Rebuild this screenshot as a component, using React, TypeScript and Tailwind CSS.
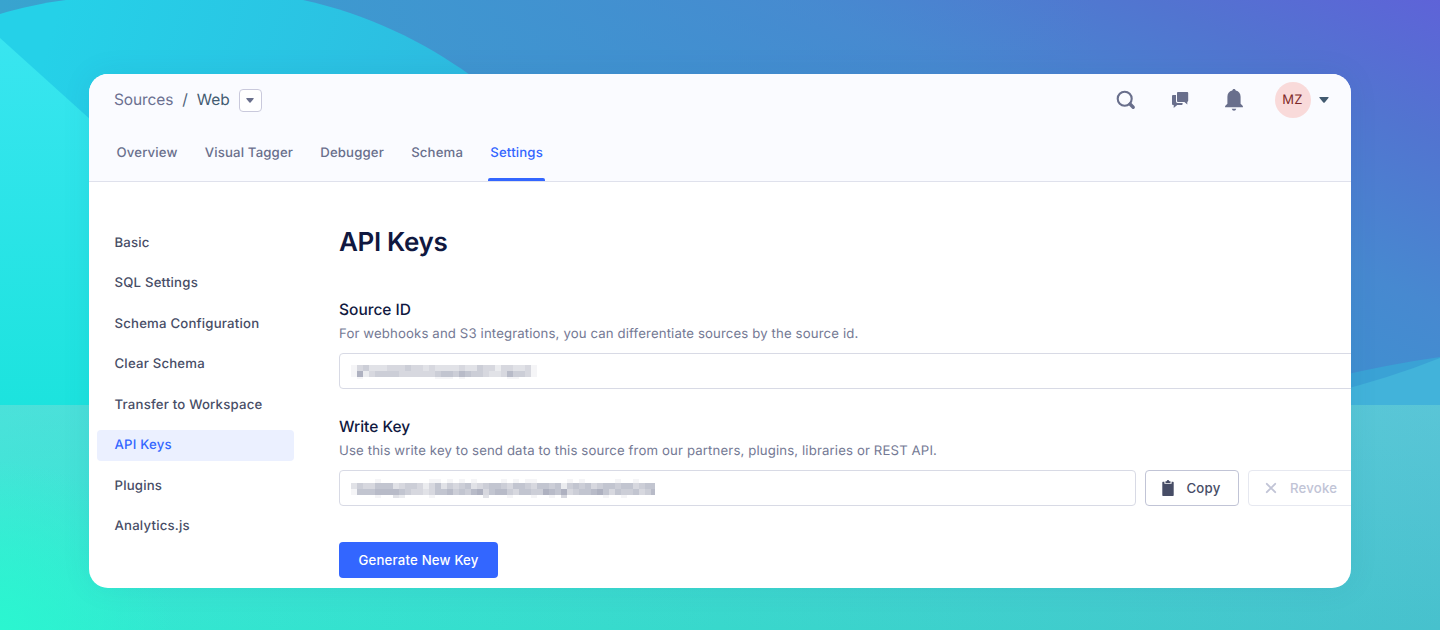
import React from "react";

const sidebarItems = [
  "Basic",
  "SQL Settings",
  "Schema Configuration",
  "Clear Schema",
  "Transfer to Workspace",
  "API Keys",
  "Plugins",
  "Analytics.js",
];

const tabs = ["Overview", "Visual Tagger", "Debugger", "Schema", "Settings"];

function Backdrop() {
  return (
    <svg
      className="absolute inset-0 h-full w-full"
      viewBox="0 0 1440 630"
      preserveAspectRatio="none"
      aria-hidden="true"
    >
      <defs>
        <linearGradient id="base" gradientUnits="userSpaceOnUse" x1="1440" y1="0" x2="1170" y2="560">
          <stop offset="0" stopColor="#5e63d8" />
          <stop offset="0.2" stopColor="#5274d0" />
          <stop offset="0.45" stopColor="#4789d0" />
          <stop offset="0.7" stopColor="#3c92d0" />
          <stop offset="1" stopColor="#3a9acf" />
        </linearGradient>
        <linearGradient id="baseLeft" gradientUnits="userSpaceOnUse" x1="0" y1="0" x2="1100" y2="0">
          <stop offset="0" stopColor="#38a4cf" />
          <stop offset="0.4" stopColor="#4096d0" stopOpacity="0.85" />
          <stop offset="1" stopColor="#4a86d0" stopOpacity="0" />
        </linearGradient>
        <linearGradient id="blob" gradientUnits="userSpaceOnUse" x1="60" y1="0" x2="460" y2="120">
          <stop offset="0" stopColor="#25d1e8" />
          <stop offset="1" stopColor="#2ebbe0" />
        </linearGradient>
        <linearGradient id="left" x1="0" y1="0" x2="0" y2="1">
          <stop offset="0" stopColor="#39e5f0" />
          <stop offset="1" stopColor="#1be3dd" />
        </linearGradient>
        <linearGradient id="floor" gradientUnits="userSpaceOnUse" x1="0" y1="560" x2="1440" y2="560">
          <stop offset="0" stopColor="#31ebd2" />
          <stop offset="0.5" stopColor="#38d8cc" />
          <stop offset="1" stopColor="#47c1cd" />
        </linearGradient>
        <linearGradient id="floorLight" x1="0" y1="0" x2="0" y2="1">
          <stop offset="0" stopColor="#7fcdea" stopOpacity="0.33" />
          <stop offset="1" stopColor="#7fcdea" stopOpacity="0" />
        </linearGradient>
        <radialGradient id="corner" gradientUnits="userSpaceOnUse" cx="0" cy="630" r="170">
          <stop offset="0" stopColor="#2bf6d0" />
          <stop offset="1" stopColor="#2bf6d0" stopOpacity="0" />
        </radialGradient>
      </defs>
      <rect width="1440" height="630" fill="url(#base)" />
      <rect width="1100" height="420" fill="url(#baseLeft)" />
      <path d="M0 14C20 8 42 3 66 0H303C368 14 424 42 470 75L520 130V420H0Z" fill="url(#blob)" />
      <path d="M0 38L92 121V420H0Z" fill="url(#left)" />
      <path d="M1330 378Q1390 364 1440 357V420H1330Z" fill="#3aa2d5" />
      <path d="M1330 393Q1390 378 1440 358V420H1330Z" fill="#42b3da" />
      <rect y="405" width="1440" height="225" fill="url(#floor)" />
      <rect y="405" width="1440" height="225" fill="url(#floorLight)" />
      <rect y="405" width="400" height="225" fill="url(#corner)" />
    </svg>
  );
}

type MosaicRow = { y: number; height: number; cells: string };

/* Each digit is the darkness of one six-pixel cell of the obscured value. */
function Mosaic({ rows, width, height }: { rows: MosaicRow[]; width: number; height: number }) {
  return (
    <svg width={width} height={height} viewBox={`0 0 ${width} ${height}`} shapeRendering="crispEdges" aria-hidden="true">
      {rows.map((row) =>
        row.cells.split("").map((c, i) =>
          c === "0" ? null : (
            <rect
              key={`${row.y}-${i}`}
              x={i * 6}
              y={row.y}
              width={6}
              height={row.height}
              fill="#9a9eb0"
              fillOpacity={Number(c) / 10}
            />
          ),
        ),
      )}
    </svg>
  );
}

const sourceIdRows: MosaicRow[] = [
  { y: 4, height: 6, cells: "1453334445443433334335442443341" },
  { y: 10, height: 6, cells: "1824555544444456657655433475541" },
  { y: 16, height: 2, cells: "0100000000000011101000000011000" },
];

const writeKeyRows: MosaicRow[] = [
  { y: 0, height: 4, cells: "000010000000011010101000010101100000101000001001000" },
  { y: 4, height: 6, cells: "354466634554246354563456654665466562565645665664566" },
  { y: 10, height: 6, cells: "166677776544346675657846775466558768456678646556457" },
  { y: 16, height: 3, cells: "000010032000010000000030001000100104000000100100000" },
];

function Caret({ className }: { className: string }) {
  return (
    <svg width="10" height="6" viewBox="0 0 10 6" className={className} aria-hidden="true">
      <path d="M0.8 0H9.2Q10 .2 9.4 1L5.7 5.5Q5 6.1 4.3 5.5L.6 1Q0 .2 .8 0Z" fill="currentColor" />
    </svg>
  );
}

function Header() {
  return (
    <header className="flex h-[108px] flex-col border-b border-[#dfe1ec] bg-[#fafbff]">
      <div className="flex h-[52px] items-center justify-between pr-[22px] pl-[25px]">
        <div className="flex items-center text-[15.5px] tracking-[-0.1px] text-[#6b7090]">
          <span>Sources</span>
          <span className="ml-[9px] text-[#4d6178]">/</span>
          <span className="ml-[9px] text-[#425a70]">Web</span>
          <button className="ml-[9px] flex h-[23px] w-[23px] items-center justify-center rounded-[4px] border border-[#c9c9dc] bg-white">
            <Caret className="h-[5px] w-[8px] text-[#696f8c]" />
          </button>
        </div>
        <div className="flex items-center text-[#696f8c]">
          <svg width="20" height="20" viewBox="0 0 20 20" aria-hidden="true">
            <circle cx="8.7" cy="8.7" r="7" fill="none" stroke="currentColor" strokeWidth="2.1" />
            <path d="M14 14L17.2 17.2" stroke="currentColor" strokeWidth="3.4" strokeLinecap="round" />
          </svg>
          <svg width="18" height="18" viewBox="0 0 18 18" className="ml-[35px]" aria-hidden="true">
            <path
              d="M6.9 1H16.3Q17.2 1 17.2 1.9V9.8Q17.2 10.7 16.3 10.7V13.4L13.4 10.9H6.9Q6 10.9 6 10V1.9Q6 1 6.9 1Z"
              fill="currentColor"
            />
            <path
              d="M5 4V10.6Q5 12 6.4 12H11.6V13Q11.6 14 10.6 14H6.2L2.7 17V14H2Q1 14 1 13V5Q1 4 2 4Z"
              fill="currentColor"
            />
          </svg>
          <svg width="20" height="24" viewBox="0 0 20 24" className="ml-[35px]" aria-hidden="true">
            <path
              d="M10 1C10.9 1 11.6 1.7 11.7 2.6C14.9 3.3 16.6 5.8 16.6 8.8V15.8L18.4 17.4Q19.2 18.2 18.9 19.2H1.1Q.8 18.2 1.6 17.4L3.4 15.8V8.8C3.4 5.8 5.1 3.3 8.3 2.6C8.4 1.7 9.1 1 10 1Z"
              fill="currentColor"
            />
            <path d="M7.7 20.8H12.3Q11.7 22.8 10 22.8T7.7 20.8Z" fill="currentColor" />
          </svg>
          <div className="ml-[30.5px] flex h-9 w-9 items-center justify-center rounded-full bg-[#f9dada] pt-px text-[13px] tracking-[0.2px] text-[#7d2828]">
            MZ
          </div>
          <Caret className="ml-[8.5px] text-[#425a70]" />
        </div>
      </div>
      <nav className="flex flex-1 gap-[23.2px] pl-[25.5px] text-[13.2px] font-medium tracking-[0.15px] text-[#696f8c]">
        {tabs.map((tab) => (
          <a
            key={tab}
            className={
              tab === "Settings"
                ? "flex flex-col justify-between px-[2px] pt-[17px] whitespace-nowrap text-[#3366ff]"
                : "px-[2px] pt-[17px] whitespace-nowrap"
            }
          >
            <span className="block leading-5">{tab}</span>
            {tab === "Settings" && <span className="-mx-[2px] h-[3px] rounded-t-[2px] bg-[#3366ff]" />}
          </a>
        ))}
      </nav>
    </header>
  );
}

function Sidebar() {
  return (
    <aside className="flex w-[197px] shrink-0 flex-col gap-[9.5px] pt-[45px] text-[13.2px] font-medium tracking-[0.2px] text-[#474d66]">
      {sidebarItems.map((item) => (
        <a
          key={item}
          className={
            item === "API Keys"
              ? "flex h-[31px] items-center rounded-[4px] bg-[#ebf0ff] pt-[2px] pl-[17.5px] text-[#3366ff]"
              : "flex h-[31px] items-center pt-[2px] pl-[17.5px]"
          }
        >
          {item}
        </a>
      ))}
    </aside>
  );
}

function Content() {
  return (
    <main className="ml-[45px] flex w-[1060px] shrink-0 flex-col items-start">
      <h1 className="mt-[44.5px] text-[26px] leading-8 font-semibold tracking-[-0.35px] text-[#101840]">API Keys</h1>

      <h2 className="mt-[41.5px] text-[15.5px] leading-5 font-medium text-[#101840]">Source ID</h2>
      <p className="mt-[4px] text-[13.2px] leading-5 tracking-[0.13px] whitespace-nowrap text-[#747994]">
        For webhooks and S3 integrations, you can differentiate sources by the source id.
      </p>
      <div className="mt-[9px] flex h-9 w-full items-start rounded-[4px] border border-[#d8dae5] bg-white pt-[7px] pl-[11px]">
        <Mosaic rows={sourceIdRows} width={186} height={18} />
      </div>

      <h2 className="mt-[28px] text-[15.5px] leading-5 font-medium text-[#101840]">Write Key</h2>
      <p className="mt-[4px] text-[13.2px] leading-5 tracking-[0.13px] whitespace-nowrap text-[#747994]">
        Use this write key to send data to this source from our partners, plugins, libraries or REST API.
      </p>
      <div className="mt-[9px] flex gap-[9px]">
        <div className="flex h-9 w-[796.5px] items-start rounded-[4px] border border-[#d8dae5] bg-white pt-[8px] pl-[11px]">
          <Mosaic rows={writeKeyRows} width={304} height={19} />
        </div>
        <button className="flex h-9 w-[94.5px] items-center rounded-[4px] border border-[#c1c4d6] bg-white pl-[16px] text-[13.2px] font-medium tracking-[0.2px] text-[#474d66]">
          <svg width="12" height="16" viewBox="0 0 12 16" aria-hidden="true">
            <path
              d="M1 1.8H2.4V3.8H9.6V1.8H11Q11.7 1.8 11.7 2.5V15.2Q11.7 15.9 11 15.9H1Q.3 15.9 .3 15.2V2.5Q.3 1.8 1 1.8Z"
              fill="currentColor"
            />
            <path d="M3.5 2.9V1.3H4.7Q4.9 0 6 0T7.3 1.3H8.5V2.9Z" fill="currentColor" />
          </svg>
          <span className="ml-[13px] pt-px">Copy</span>
        </button>
        <button className="flex h-9 w-[114px] items-center rounded-[4px] border border-[#e6e8f0] bg-white pl-[16px] text-[13.2px] font-medium tracking-[0.2px] text-[#c1c4d6]">
          <svg width="12" height="12" viewBox="0 0 12 12" aria-hidden="true">
            <path d="M1.8 1.8L10.2 10.2M10.2 1.8L1.8 10.2" stroke="currentColor" strokeWidth="1.9" strokeLinecap="round" />
          </svg>
          <span className="ml-[13px] pt-px">Revoke</span>
        </button>
      </div>

      <button className="mt-[36px] flex h-9 w-[159px] items-center justify-center rounded-[4px] bg-[#3366ff] pt-px text-[13.2px] font-medium tracking-[0.2px] whitespace-nowrap text-white">
        Generate New Key
      </button>
    </main>
  );
}

export default function App() {
  return (
    <div className="relative flex h-[630px] w-[1440px] overflow-hidden px-[89px] pt-[74px] font-['Inter','Liberation_Sans',sans-serif] antialiased [text-rendering:geometricPrecision]">
      <Backdrop />
      <div className="relative h-[514px] w-[1262px] overflow-hidden rounded-[19px] bg-white shadow-[0_0_30px_rgba(20,80,140,0.08)]">
        <Header />
        <div className="flex pl-[8px]">
          <Sidebar />
          <Content />
        </div>
      </div>
    </div>
  );
}
